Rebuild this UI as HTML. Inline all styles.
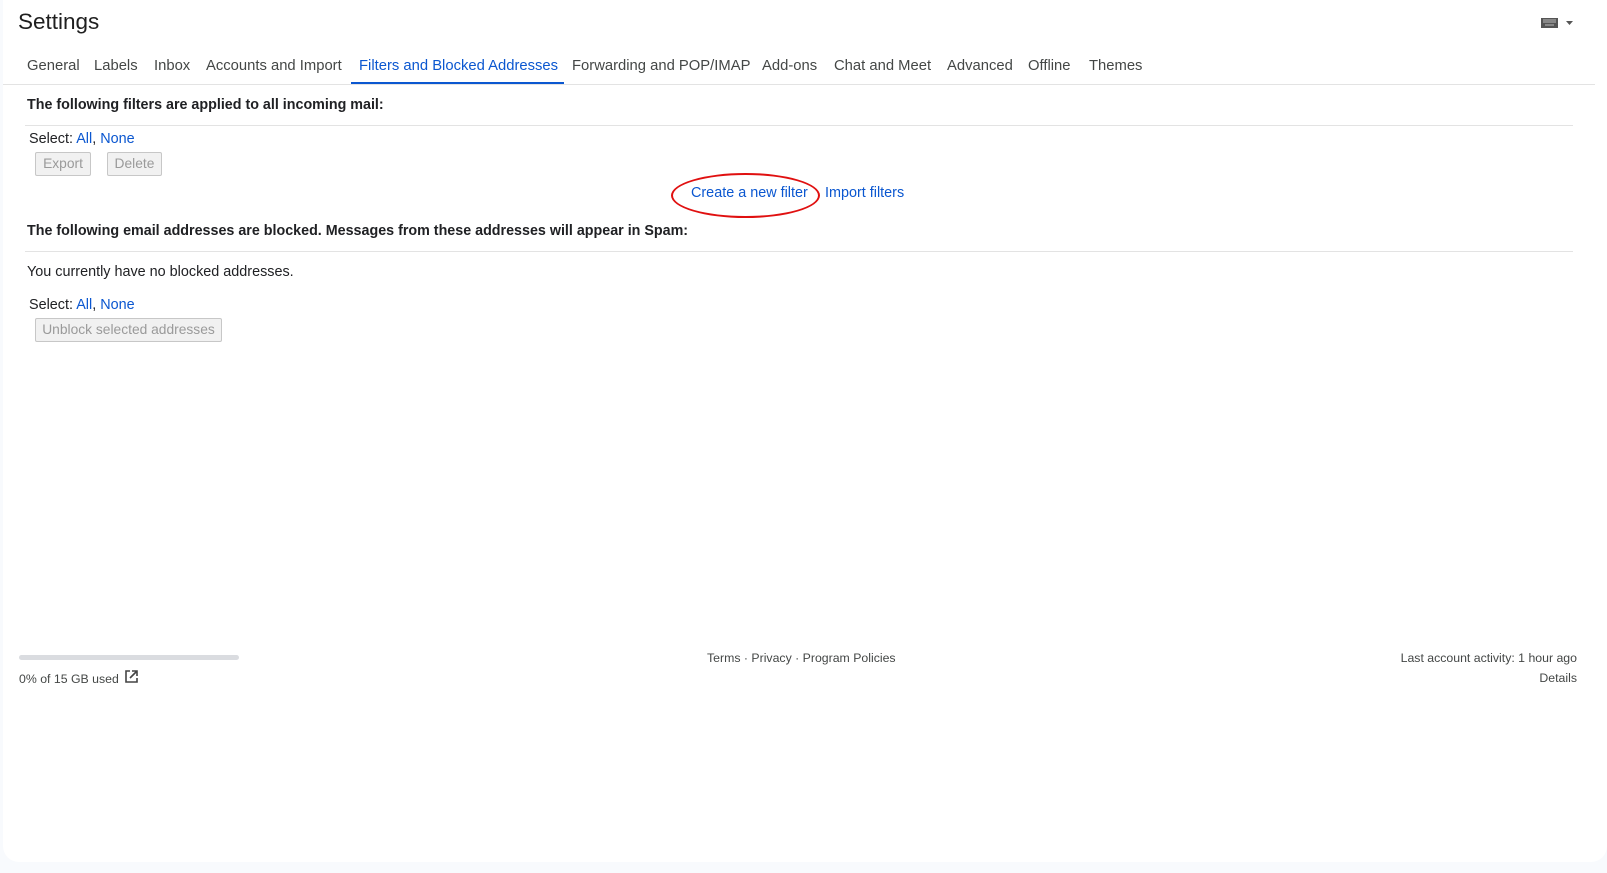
<!DOCTYPE html>
<html><head><style>
body{margin:0;width:1607px;height:873px;background:#f8fafd;font-family:"Liberation Sans",sans-serif;color:#202124;position:relative;overflow:hidden}
.card{position:absolute;left:3px;top:0;width:1604px;height:862px;background:#fff;border-radius:0 0 16px 16px}
.a{position:absolute;white-space:nowrap}
a{color:#0b57d0;text-decoration:none}
.tab{position:absolute;top:58px;font-size:14.8px;color:#444746}
.btn{position:absolute;border:1px solid #c7c7c7;background:#f1f1f1;color:#9a9a9a;font-size:13.8px;border-radius:2px;height:22px;line-height:22px;text-align:center}
.b{font-weight:bold;font-size:14.3px}
.t{font-size:14.4px}
.hr{position:absolute;height:1px;background:#e3e3e3}
.f{font-size:12.3px;color:#444746}
</style></head><body>
<div class="card"></div>
<div class="a" style="left:18px;top:9px;font-size:22.5px;color:#1f1f1f">Settings</div>
<svg class="a" style="left:1541px;top:17px" width="35" height="12"><rect x="0" y="1" width="17" height="10" fill="#555"/><path d="M2 3h13M2 5h13M4 8h9" stroke="#bbb" stroke-width="1"/><path d="M25 4h7l-3.5 4z" fill="#555"/></svg>
<div class="tab" style="left:27px">General</div>
<div class="tab" style="left:94px">Labels</div>
<div class="tab" style="left:154px">Inbox</div>
<div class="tab" style="left:206px">Accounts and Import</div>
<div class="tab" style="left:359px;color:#0b57d0">Filters and Blocked Addresses</div>
<div class="a" style="left:351px;top:82px;width:213px;height:3px;background:#0b57d0"></div>
<div class="tab" style="left:572px">Forwarding and POP/IMAP</div>
<div class="tab" style="left:762px">Add-ons</div>
<div class="tab" style="left:834px">Chat and Meet</div>
<div class="tab" style="left:947px">Advanced</div>
<div class="tab" style="left:1028px">Offline</div>
<div class="tab" style="left:1089px">Themes</div>
<div class="hr" style="left:3px;top:84px;width:1592px"></div>
<div class="a b" style="left:27px;top:97px">The following filters are applied to all incoming mail:</div>
<div class="hr" style="left:25px;top:125px;width:1548px"></div>
<div class="a t" style="left:29px;top:131px">Select: <a>All</a>, <a>None</a></div>
<div class="btn" style="left:35px;top:152px;width:54px">Export</div>
<div class="btn" style="left:107px;top:152px;width:53px">Delete</div>
<div class="a t" style="left:691px;top:185px"><a>Create a new filter</a></div>
<div class="a t" style="left:825px;top:185px"><a>Import filters</a></div>
<div class="a" style="left:671px;top:173px;width:145px;height:41px;border:2.5px solid #e01010;border-radius:50%"></div>
<div class="a b" style="left:27px;top:223px">The following email addresses are blocked. Messages from these addresses will appear in Spam:</div>
<div class="hr" style="left:25px;top:251px;width:1548px"></div>
<div class="a t" style="left:27px;top:264px">You currently have no blocked addresses.</div>
<div class="a t" style="left:29px;top:297px">Select: <a>All</a>, <a>None</a></div>
<div class="btn" style="left:35px;top:318px;width:185px">Unblock selected addresses</div>
<div class="a" style="left:19px;top:655px;width:220px;height:5px;background:#dadce0;border-radius:3px"></div>
<div class="a f" style="left:19px;top:672px">0% of 15 GB used</div>
<svg class="a" style="left:124px;top:669px" width="15" height="15"><path d="M6 2H2v11h11V9" fill="none" stroke="#444" stroke-width="1.6"/><path d="M8 2h5v5M13 2L6 9" fill="none" stroke="#444" stroke-width="1.6"/></svg>
<div class="a f" style="left:707px;top:651px">Terms · Privacy · Program Policies</div>
<div class="a f" style="right:30px;top:651px">Last account activity: 1 hour ago</div>
<div class="a f" style="right:30px;top:671px">Details</div>
</body></html>
